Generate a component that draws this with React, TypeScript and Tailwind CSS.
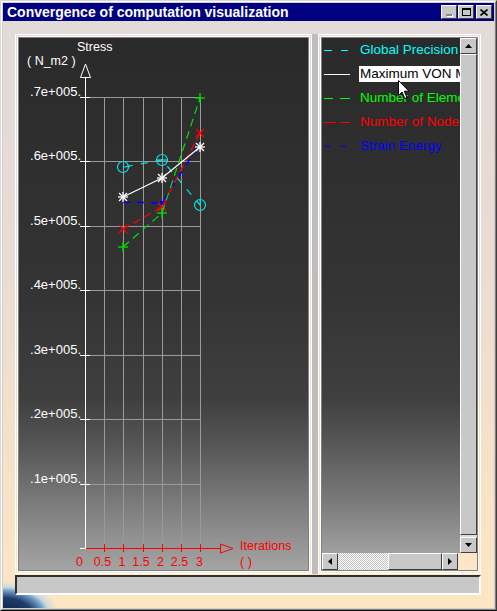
import React from "react";

const FONT = "'Liberation Sans', Arial, sans-serif";

function Star({ x, y, c }: { x: number; y: number; c: string }) {
  return (
    <g stroke={c} strokeWidth={1.3}>
      <line x1={x - 5} y1={y} x2={x + 5} y2={y} />
      <line x1={x} y1={y - 5} x2={x} y2={y + 5} />
      <line x1={x - 4} y1={y - 4} x2={x + 4} y2={y + 4} />
      <line x1={x - 4} y1={y + 4} x2={x + 4} y2={y - 4} />
    </g>
  );
}

function Cross({ x, y, c }: { x: number; y: number; c: string }) {
  return (
    <g stroke={c} strokeWidth={1.3}>
      <line x1={x - 4} y1={y - 4} x2={x + 4} y2={y + 4} />
      <line x1={x - 4} y1={y + 4} x2={x + 4} y2={y - 4} />
    </g>
  );
}

function Plus({ x, y, c }: { x: number; y: number; c: string }) {
  return (
    <g stroke={c} strokeWidth={1.3}>
      <line x1={x - 5} y1={y} x2={x + 5} y2={y} />
      <line x1={x} y1={y - 5} x2={x} y2={y + 5} />
    </g>
  );
}

function Chart() {
  const yOf = (v: number) => 548 - v * 64.43;
  const gx = [104, 123, 143, 162, 181, 200];
  const ylabels = [
    ".1e+005.",
    ".2e+005.",
    ".3e+005.",
    ".4e+005.",
    ".5e+005.",
    ".6e+005.",
    ".7e+005.",
  ];
  const xlabels: [string, number][] = [
    ["0", 79.5],
    ["0.5", 102.5],
    ["1", 122],
    ["1.5", 141],
    ["2", 160.5],
    ["2.5", 179.5],
    ["3", 199.5],
  ];
  return (
    <svg
      width={289}
      height={532}
      viewBox="19 38 289 532"
      style={{ fontFamily: FONT }}
      className="block"
    >
      <g stroke="#9a9a9a" strokeWidth={1} shapeRendering="crispEdges">
        {gx.map((x) => (
          <line key={x} x1={x + 0.5} y1={97} x2={x + 0.5} y2={548} />
        ))}
        {[1, 2, 3, 4, 5, 6, 7].map((v) => (
          <line key={v} x1={85} y1={Math.round(yOf(v)) + 0.5} x2={200.5} y2={Math.round(yOf(v)) + 0.5} />
        ))}
      </g>
      <g stroke="#ffffff" strokeWidth={1} shapeRendering="crispEdges" fill="none">
        <line x1={85.5} y1={77} x2={85.5} y2={549} />
        {[0, 1, 2, 3, 4, 5, 6, 7].map((v) => (
          <line key={v} x1={80} y1={Math.round(yOf(v)) + 0.5} x2={90} y2={Math.round(yOf(v)) + 0.5} />
        ))}
      </g>
      <polygon points="85.5,64 80.5,77.5 90.5,77.5" fill="none" stroke="#ffffff" strokeWidth={1} />
      <g fill="#ffffff" fontSize={12.5}>
        <text x={77} y={51}>Stress</text>
        <text x={27} y={65}>( N_m2 )</text>
      </g>
      <g fill="#ffffff" fontSize={13}>
        {ylabels.map((l, i) => (
          <text key={l} x={81} y={Math.round(yOf(i + 1)) - 1} textAnchor="end">
            {l}
          </text>
        ))}
      </g>
      <g stroke="#ff0000" strokeWidth={1} shapeRendering="crispEdges">
        <line x1={86} y1={548.5} x2={221} y2={548.5} />
        {[104, 123, 143, 162, 181, 200].map((x) => (
          <line key={x} x1={x + 0.5} y1={544} x2={x + 0.5} y2={552} />
        ))}
      </g>
      <polygon points="220.5,544 220.5,553 233,548.5" fill="none" stroke="#ff0000" strokeWidth={1} />
      <g fill="#ff0000" fontSize={12.5}>
        {xlabels.map(([t, x]) => (
          <text key={t} x={x} y={566} textAnchor="middle">
            {t}
          </text>
        ))}
        <text x={240} y={550}>Iterations</text>
        <text x={240} y={566}>( )</text>
      </g>
      <polyline
        points="123,167 162,160 200,205"
        fill="none"
        stroke="#00e5e5"
        strokeWidth={1.2}
        strokeDasharray="7 8"
        strokeDashoffset={-3}
      />
      <g stroke="#00e5e5" strokeWidth={1.2} fill="none">
        <circle cx={123} cy={167} r={5.5} />
        <line x1={123} y1={167} x2={130} y2={166.5} />
        <circle cx={162} cy={160} r={5.5} />
        <line x1={157} y1={160} x2={167} y2={160} />
        <circle cx={200} cy={205} r={5.5} />
        <line x1={200} y1={200} x2={200.5} y2={206} />
      </g>
      <polyline
        points="123,202 162,203 200,143"
        fill="none"
        stroke="#0000ff"
        strokeWidth={1.5}
        strokeDasharray="7 7"
      />
      <rect x={160} y={201} width={4} height={4} fill="#0000ff" />
      <polyline
        points="123,229 162,207 200,133"
        fill="none"
        stroke="#ff0000"
        strokeWidth={1.2}
        strokeDasharray="8 4"
      />
      <Cross x={123} y={229} c="#ff0000" />
      <Cross x={162} y={207} c="#ff0000" />
      <Cross x={200} y={133} c="#ff0000" />
      <polyline
        points="123,247 162,213 200,98"
        fill="none"
        stroke="#00e000"
        strokeWidth={1.2}
        strokeDasharray="8 5"
      />
      <Plus x={123} y={247} c="#00e000" />
      <Plus x={162} y={213} c="#00e000" />
      <Plus x={200} y={98} c="#00e000" />
      <polyline points="123,197 162,178 200,147" fill="none" stroke="#ffffff" strokeWidth={1.2} />
      <Star x={123} y={197} c="#ffffff" />
      <Star x={162} y={178} c="#ffffff" />
      <Star x={200} y={147} c="#ffffff" />
    </svg>
  );
}

function LineSample({ kind }: { kind: string }) {
  const segs: Record<string, [number, number][]> = {
    cyan: [
      [0, 8],
      [17, 24],
    ],
    white: [[0, 26]],
    green: [
      [0, 9],
      [16, 26],
    ],
    red: [
      [0, 12],
      [16, 26],
    ],
    blue: [
      [0, 6],
      [16, 22],
    ],
  };
  const col: Record<string, string> = {
    cyan: "#00ffff",
    white: "#ffffff",
    green: "#00ff00",
    red: "#ff0000",
    blue: "#0000ff",
  };
  return (
    <svg width={30} height={3} className="block shrink-0">
      {segs[kind].map(([a, b], i) => (
        <line key={i} x1={a} y1={1.5} x2={b} y2={1.5} stroke={col[kind]} strokeWidth={1} shapeRendering="crispEdges" />
      ))}
    </svg>
  );
}

const btnBevel =
  "bg-[#c8c8c8] border border-t-white border-l-white border-r-[#404040] border-b-[#404040]";

function Legend() {
  const rows: { kind: string; text: string; cls: string }[] = [
    { kind: "cyan", text: "Global Precision", cls: "text-[#00ffff]" },
    { kind: "white", text: "Maximum VON Mises", cls: "bg-white text-black" },
    { kind: "green", text: "Number of Elements", cls: "text-[#00ff00]" },
    { kind: "red", text: "Number of Nodes", cls: "text-[#ff0000]" },
    { kind: "blue", text: "Strain Energy", cls: "text-[#0000ff]" },
  ];
  return (
    <div className="flex flex-col">
      {rows.map((r) => (
        <div key={r.kind} className="flex h-[24px] items-center whitespace-nowrap pl-[2px]">
          <LineSample kind={r.kind} />
          <span className={`ml-[5px] px-[1px] text-[13.5px] leading-[16px] ${r.cls}`}>{r.text}</span>
        </div>
      ))}
    </div>
  );
}

export default function App() {
  return (
    <div
      className="relative h-[611px] w-[497px] overflow-hidden border border-t-[#d8d8d8] border-l-[#d8d8d8] border-r-[#404040] border-b-[#101010]"
      style={{ fontFamily: FONT }}
    >
      <div className="flex h-full flex-col border border-t-white border-l-white border-r-[#808080] border-b-[#808080] bg-[#d4d0c8] p-[1px]">
        <div className="flex h-[18px] shrink-0 items-center bg-[#000080] pl-[4px] pr-[2px]">
          <span className="text-[14px] font-bold leading-none text-white">
            Convergence of computation visualization
          </span>
          <div className="ml-auto flex items-center">
            <div className={`flex h-[14px] w-[16px] items-end justify-center pb-[2px] ${btnBevel}`}>
              <div className="h-[2px] w-[6px] bg-[#8a8a8a] shadow-[1px_1px_0_#ffffff]" />
            </div>
            <div className={`ml-[1px] flex h-[14px] w-[16px] items-center justify-center ${btnBevel}`}>
              <div className="h-[8px] w-[9px] border border-t-2 border-black" />
            </div>
            <div className={`ml-[2px] flex h-[14px] w-[16px] items-center justify-center ${btnBevel}`}>
              <svg width={8} height={7} className="block">
                <path d="M0.5 0.5 L7.5 6.5 M7.5 0.5 L0.5 6.5" stroke="#000" strokeWidth={1.6} />
              </svg>
            </div>
          </div>
        </div>
        <div className="relative flex-1 bg-[linear-gradient(180deg,#e3dbd8_0%,#e8dcd3_40%,#f4e1ca_70%,#fde6c3_100%)] pl-[12px] pt-[13px]">
          <div className="absolute bottom-0 left-0 h-[26px] w-[55px] bg-[radial-gradient(ellipse_at_0%_130%,#0c1a36_0%,#1e3c6c_38%,#6a98c0_52%,#c8d8e2_60%,rgba(253,230,195,0)_72%)]" />
          <div className="relative flex h-[540px]">
            <div className="h-full w-[297px] border-[3px] border-double border-white">
              <div className="h-full w-full overflow-hidden border border-[#808080] bg-[linear-gradient(180deg,#2a2a2a_0%,#343434_49%,#3f3f3f_68%,#575757_77%,#7a7a7a_87%,#a4a4a4_100%)]">
                <Chart />
              </div>
            </div>
            <div className="h-full w-[6px] bg-[#bdbdbd]" />
            <div className="h-full w-[163px] border-[3px] border-double border-white">
              <div className="flex h-full w-full flex-col border border-[#808080]">
                <div className="flex min-h-0 flex-1">
                  <div className="min-w-0 flex-1 overflow-hidden bg-[linear-gradient(180deg,#2a2a2a_0%,#343434_50%,#3f3f3f_70%,#585858_79%,#7a7a7a_90%,#a0a0a0_100%)]">
                    <Legend />
                  </div>
                  <div className="flex w-[17px] flex-col">
                    <div className={`flex h-[16px] shrink-0 items-center justify-center ${btnBevel}`}>
                      <svg width={7} height={4} className="block">
                        <path d="M3.5 0 L7 4 L0 4 Z" fill="#000" />
                      </svg>
                    </div>
                    <div className={`flex-1 ${btnBevel}`} />
                    <div className="h-[2px] shrink-0 bg-[#dcdcdc]" />
                    <div className={`flex h-[16px] shrink-0 items-center justify-center ${btnBevel}`}>
                      <svg width={7} height={4} className="block">
                        <path d="M0 0 L7 0 L3.5 4 Z" fill="#000" />
                      </svg>
                    </div>
                  </div>
                </div>
                <div className="flex h-[17px] shrink-0">
                  <div className={`flex h-full w-[16px] items-center justify-center ${btnBevel}`}>
                    <svg width={4} height={7} className="block">
                      <path d="M4 0 L4 7 L0 3.5 Z" fill="#000" />
                    </svg>
                  </div>
                  <div className="h-full w-[50px] bg-[image:repeating-conic-gradient(#c0c0c0_0%_25%,#ffffff_0%_50%)] bg-[length:2px_2px]" />
                  <div className={`h-full w-[54px] ${btnBevel}`} />
                  <div className={`flex h-full w-[16px] items-center justify-center ${btnBevel}`}>
                    <svg width={4} height={7} className="block">
                      <path d="M0 0 L4 3.5 L0 7 Z" fill="#000" />
                    </svg>
                  </div>
                  <div className="h-full flex-1 bg-[#fce6c6]" />
                </div>
              </div>
            </div>
          </div>
          <div className="relative mt-[1px] h-[20px] w-[466px] border-2 border-t-[#303030] border-l-[#303030] border-r-white border-b-white bg-[#c8c8c8]" />
        </div>
      </div>
      <svg width={13} height={20} className="absolute left-[397px] top-[79px] block">
        <path
          d="M0.5 0.5 L0.5 15.5 L4 12 L6.8 18.5 L9 17.6 L6.3 11.2 L11 11.2 Z"
          fill="#ffffff"
          stroke="#000000"
          strokeWidth={1}
        />
      </svg>
    </div>
  );
}
